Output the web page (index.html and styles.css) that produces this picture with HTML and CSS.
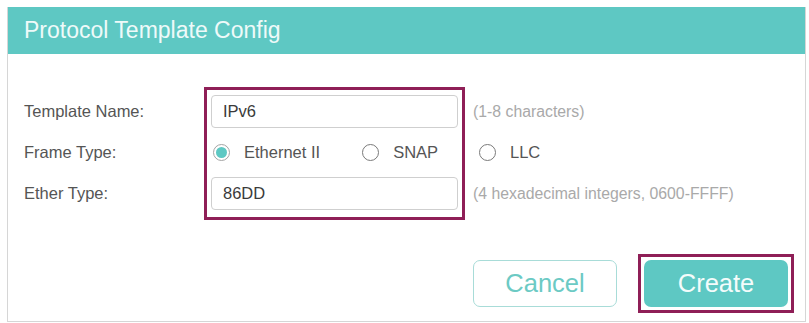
FILE: index.html
```html
<!DOCTYPE html>
<html>
<head>
<meta charset="utf-8">
<title>Protocol Template Config</title>
<link rel="stylesheet" href="styles.css">
</head>
<body>
<div class="panel">
  <div class="panel-header">Protocol Template Config</div>
  <div class="panel-body">
    <div class="form">
      <div class="col labels">
        <div class="row row-input">Template Name:</div>
        <div class="row row-radio">Frame Type:</div>
        <div class="row row-input">Ether Type:</div>
      </div>
      <div class="highlight">
        <div class="row row-input"><div class="input">IPv6</div></div>
        <div class="row row-radio">
          <span class="radio checked"></span><span class="radio-label">Ethernet II</span>
          <span class="radio snap"></span><span class="radio-label">SNAP</span>
        </div>
        <div class="row row-input"><div class="input">86DD</div></div>
      </div>
      <div class="col hints">
        <div class="row row-input hint">(1-8 characters)</div>
        <div class="row row-radio">
          <span class="radio llc"></span><span class="radio-label">LLC</span>
        </div>
        <div class="row row-input hint">(4 hexadecimal integers, 0600-FFFF)</div>
      </div>
    </div>
    <div class="actions">
      <button class="btn btn-cancel">Cancel</button>
      <div class="btn-outline"><button class="btn btn-create">Create</button></div>
    </div>
  </div>
</div>
</body>
</html>
```
FILE: styles.css
```css
* { box-sizing: border-box; }
html, body { margin: 0; padding: 0; background: #ffffff; }
body { font-family: "Liberation Sans", Arial, sans-serif; }

.panel {
  margin: 7px 0 0 7px;
  width: 799px;
  height: 315px;
  border: 1px solid #d6d6d6;
  border-top: none;
  display: flex;
  flex-direction: column;
}

.panel-header {
  height: 47px;
  background: #5ec8c3;
  color: #eefaf9;
  font-size: 23px;
  line-height: 46px;
  padding-left: 16px;
}

.panel-body {
  flex: 1;
  padding: 33px 11px 0 16px;
  display: flex;
  flex-direction: column;
}

.form {
  display: flex;
  align-items: flex-start;
}

.col { padding-top: 8px; }
.labels { width: 180px; color: #555; font-size: 16.5px; }

.row { display: flex; align-items: center; }
.row-input { height: 33px; }
.row-radio { height: 49px; }

.highlight {
  border: 3px solid #8f1f57;
  padding: 5px 4px 7px 4px;
  width: 261px;
}

.input {
  width: 247px;
  height: 33px;
  border: 1px solid #cfcfcf;
  border-radius: 4px;
  padding-left: 11px;
  display: flex;
  align-items: center;
  font-size: 16.5px;
  color: #3a3a3a;
}

.radio {
  width: 17px;
  height: 17px;
  border-radius: 50%;
  border: 1.5px solid #7a7a7a;
  margin-left: 2px;
  position: relative;
  flex: none;
}
.radio.checked { border-color: #a4a4a4; }
.radio.checked::after {
  content: "";
  position: absolute;
  left: 1.5px; top: 1.5px;
  width: 11px; height: 11px;
  border-radius: 50%;
  background: #5ec8c3;
}
.radio.snap { margin-left: 42px; }
.radio.llc { margin-left: 6px; }

.radio-label {
  margin-left: 14px;
  font-size: 16.5px;
  color: #555;
}

.hints { padding-left: 8px; }
.hint { color: #a9a9a9; font-size: 15.8px; }

.actions {
  margin-top: 34px;
  display: flex;
  justify-content: flex-end;
  align-items: center;
  gap: 21px;
}

.btn {
  width: 144px;
  height: 47px;
  border-radius: 7px;
  font-family: "Liberation Sans", Arial, sans-serif;
  font-size: 25.5px;
  padding: 0;
  cursor: pointer;
}
.btn-cancel {
  background: #fff;
  border: 1.5px solid #a8dcd8;
  color: #6ccac4;
}
.btn-outline {
  border: 3px solid #8f1f57;
  padding: 3px;
}
.btn-create {
  display: block;
  background: #5ec8c3;
  border: none;
  color: #f4fcfb;
}
```
